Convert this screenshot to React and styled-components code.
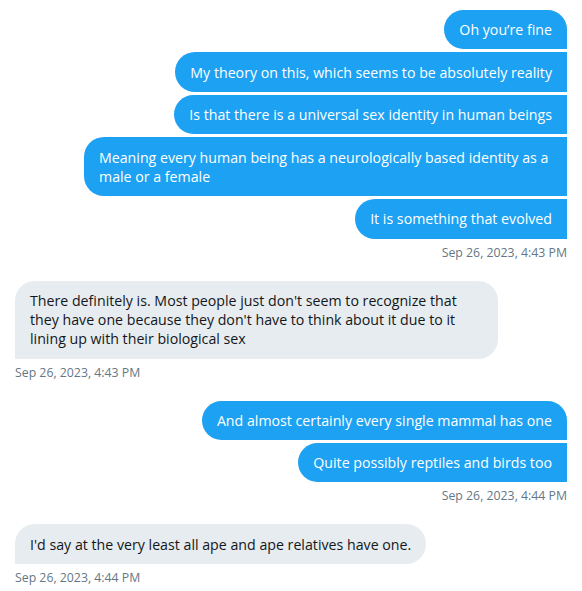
import React from "react";
import styled, { createGlobalStyle } from "styled-components";

const GlobalStyle = createGlobalStyle`
  body {
    margin: 0;
    background: #ffffff;
    font-family: "Open Sans", "Noto Sans", sans-serif;
  }
`;

const Thread = styled.div`
  display: flex;
  flex-direction: column;
  gap: 20px;
  padding: 10px 15px 10px 15px;
`;

const Group = styled.div`
  display: flex;
  flex-direction: column;
  align-items: ${(p) => (p.$mine ? "flex-end" : "flex-start")};
  gap: 3px;
`;

const Bubble = styled.div`
  max-width: 453px;
  padding: 10.15px 15px;
  font-size: 14.2px;
  line-height: 19.2px;
  color: ${(p) => (p.$mine ? "#ffffff" : "#14171a")};
  background: ${(p) => (p.$mine ? "#1da1f2" : "#e6ecf0")};
  border-radius: ${(p) =>
    p.$mine
      ? p.$first
        ? "20px 20px 0 20px"
        : "20px 0 0 20px"
      : "20px 20px 20px 0"};
`;

const Stamp = styled.div`
  margin-top: 3px;
  font-size: 12.3px;
  line-height: 16px;
  color: #657786;
`;

const groups = [
  {
    mine: true,
    time: "Sep 26, 2023, 4:43 PM",
    texts: [
      "Oh you’re fine",
      "My theory on this, which seems to be absolutely reality",
      "Is that there is a universal sex identity in human beings",
      "Meaning every human being has a neurologically based identity as a male or a female",
      "It is something that evolved",
    ],
  },
  {
    mine: false,
    time: "Sep 26, 2023, 4:43 PM",
    texts: [
      "There definitely is. Most people just don't seem to recognize that they have one because they don't have to think about it due to it lining up with their biological sex",
    ],
  },
  {
    mine: true,
    time: "Sep 26, 2023, 4:44 PM",
    texts: [
      "And almost certainly every single mammal has one",
      "Quite possibly reptiles and birds too",
    ],
  },
  {
    mine: false,
    time: "Sep 26, 2023, 4:44 PM",
    texts: ["I'd say at the very least all ape and ape relatives have one."],
  },
];

export default function App() {
  return (
    <>
      <GlobalStyle />
      <Thread>
        {groups.map((g, i) => (
          <Group key={i} $mine={g.mine}>
            {g.texts.map((t, j) => (
              <Bubble key={j} $mine={g.mine} $first={j === 0}>
                {t}
              </Bubble>
            ))}
            <Stamp>{g.time}</Stamp>
          </Group>
        ))}
      </Thread>
    </>
  );
}
